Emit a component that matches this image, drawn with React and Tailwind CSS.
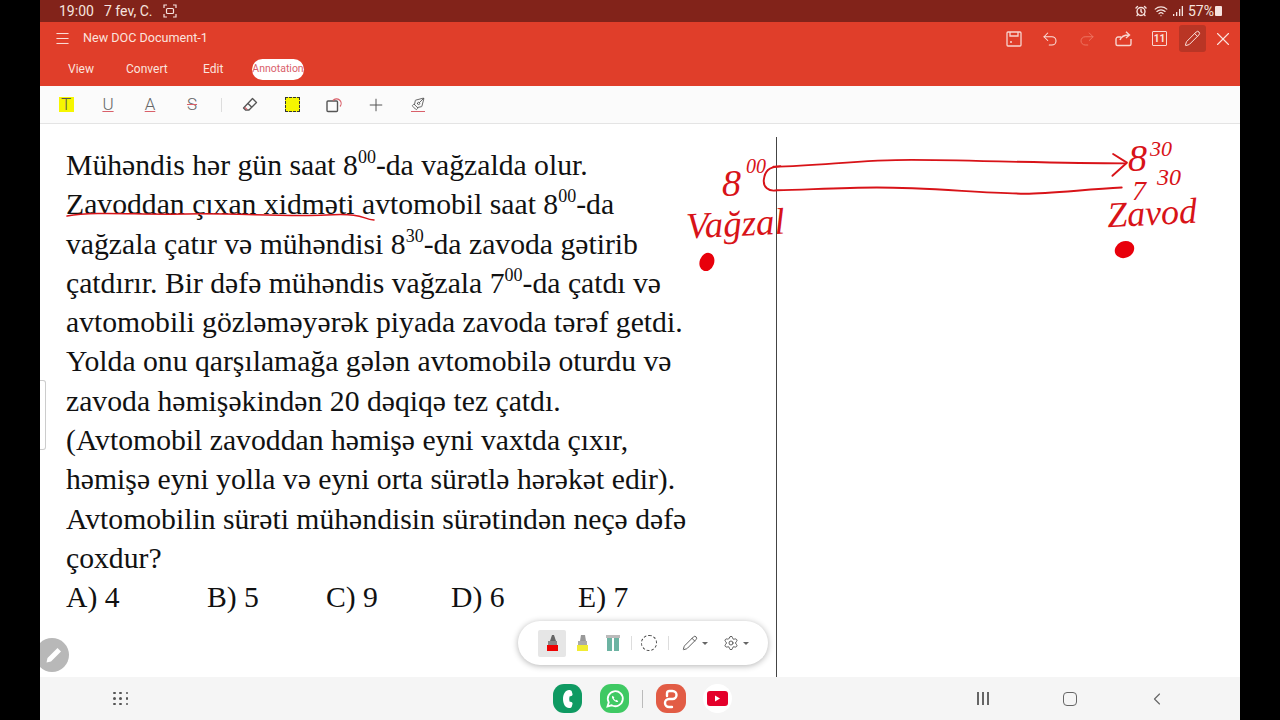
import React from 'react';
import { Menu, Undo2, Redo2, X, Plus, Pencil, Settings, ChevronLeft, AlarmClock, Wifi, PenTool } from 'lucide-react';

const SUP = "text-[18px] top-[-12px] align-baseline relative";

const LINES = [
  <>Mühəndis hər gün saat 8<sup className={SUP}>00</sup>-da vağzalda olur.</>,
  <>Zavoddan çıxan xidməti avtomobil saat 8<sup className={SUP}>00</sup>-da</>,
  <>vağzala çatır və mühəndisi 8<sup className={SUP}>30</sup>-da zavoda gətirib</>,
  <>çatdırır. Bir dəfə mühəndis vağzala 7<sup className={SUP}>00</sup>-da çatdı və</>,
  <>avtomobili gözləməyərək piyada zavoda tərəf getdi.</>,
  <>Yolda onu qarşılamağa gələn avtomobilə oturdu və</>,
  <>zavoda həmişəkindən 20 dəqiqə tez çatdı.</>,
  <>(Avtomobil zavoddan həmişə eyni vaxtda çıxır,</>,
  <>həmişə eyni yolla və eyni orta sürətlə hərəkət edir).</>,
  <>Avtomobilin sürəti mühəndisin sürətindən neçə dəfə</>,
  <>çoxdur?</>,
];

function SaveIcon() {
  return (
    <svg width="16" height="16" viewBox="0 0 16 16" fill="none" stroke="#f8d5cf" strokeWidth="1.3">
      <rect x="1" y="1" width="14" height="14" rx="1" />
      <path d="M4 1v4h8V1M4 11h2" />
    </svg>
  );
}

function ShareIcon() {
  return (
    <svg width="17" height="16" viewBox="0 0 17 16" fill="none" stroke="#f8d5cf" strokeWidth="1.4">
      <path d="M6 6H3C2 6 1 7 1 8v5c0 1 .7 1.500 1.500 1.500h12c.8 0 1.500-.5 1.500-1.500V8" />
      <path d="M5 9c1-3 4-5 9-5M11 .8 14.500 4 11 7" />
    </svg>
  );
}

function ToolbarBtn({ children }) {
  return <div className="w-[42px] h-full flex items-center justify-center">{children}</div>;
}

function Toolbar() {
  return (
    <div className="h-[38px] bg-[#fbfbfb] border-b border-[#e4e4e4] flex items-center pl-[5px] text-[#666] text-[17px] font-light font-['Roboto',sans-serif]">
      <ToolbarBtn>
        <span className="w-[15px] h-[15px] bg-[#f6f600] flex items-center justify-center leading-none text-[#555]">T</span>
      </ToolbarBtn>
      <ToolbarBtn><span className="underline decoration-[#d9606a] underline-offset-1 leading-none">U</span></ToolbarBtn>
      <ToolbarBtn><span className="underline decoration-[#d9606a] underline-offset-1 leading-none">A</span></ToolbarBtn>
      <ToolbarBtn><span className="line-through decoration-[#d9606a] leading-none">S</span></ToolbarBtn>
      <div className="w-[16px] flex justify-center"><div className="w-px h-[14px] bg-[#ddd]" /></div>
      <ToolbarBtn>
        <svg width="16" height="16" viewBox="0 0 16 16" fill="none" stroke="#555" strokeWidth="1.3" strokeLinejoin="round">
          <path d="M10.500 1.500 14.500 5.500 7 13H3.500L1.500 11z" />
          <path d="M6 6.500 9.800 10.300" />
          <path d="M3 10.500 5 12.500" stroke="#d9606a" />
        </svg>
      </ToolbarBtn>
      <ToolbarBtn>
        <span className="w-[15px] h-[15px] bg-[#f6f600] border border-dashed border-[#333]" />
      </ToolbarBtn>
      <ToolbarBtn>
        <svg width="17" height="17" viewBox="0 0 17 17" fill="none">
          <rect x="1" y="5" width="10.500" height="10.500" rx="1" stroke="#555" strokeWidth="1.400" />
          <path d="M7 4.500a4.500 4.500 0 1 1 7 6" stroke="#d9606a" strokeWidth="1.200" />
        </svg>
      </ToolbarBtn>
      <ToolbarBtn><Plus size={20} strokeWidth={1.2} color="#555" /></ToolbarBtn>
      <ToolbarBtn>
        <div className="flex flex-col items-center">
          <PenTool size={14} strokeWidth={1.5} color="#555" className="-scale-x-100" />
          <div className="w-[14px] h-px bg-[#d9606a]" />
        </div>
      </ToolbarBtn>
    </div>
  );
}

function Ink() {
  // freehand strokes on the right-hand page, coordinates follow the zoomed ink
  return (
    <svg className="absolute left-[630px] top-[11px]" width="540" height="145" viewBox="0 0 1566 420" fill="none" stroke="#d81318" strokeWidth="5.500" strokeLinecap="round" strokeLinejoin="round">
      <path d="M300 92C450 88 550 72 700 72S1100 82 1320 82" />
      <path d="M1285 55 1325 80 1283 118" />
      <path d="M1310 152C1200 158 1100 170 1030 170 900 168 750 152 600 152 500 152 400 158 310 160 285 165 270 150 272 130 275 105 285 92 320 90" />
      <ellipse cx="107" cy="368" rx="21" ry="27" fill="#e8000b" stroke="none" transform="rotate(20 107 368)" />
      <ellipse cx="1318" cy="332" rx="29" ry="24" fill="#e8000b" stroke="none" transform="rotate(-25 1318 332)" />
    </svg>
  );
}

function InkText({ className, children }) {
  return (
    <span className={`absolute whitespace-nowrap leading-none text-[#d81318] italic font-['Liberation_Serif',serif] ${className}`}>
      {children}
    </span>
  );
}

export default function App() {
  return (
    <div className="w-[1280px] h-[720px] bg-black flex justify-center overflow-hidden">
      <div className="w-[1200px] h-full flex flex-col bg-white">
        {/* status bar */}
        <div className="h-[22px] bg-[#82231a] flex items-center justify-between pl-[19px] pr-[18px] text-[#f6e3df] text-[14px] font-['Roboto',sans-serif]">
          <div className="flex items-center">
            <span className="w-[45px]">19:00</span>
            <span className="w-[59px]">7 fev, C.</span>
            <svg width="14" height="14" viewBox="0 0 14 14" fill="none" stroke="#f6e3df" strokeWidth="1.200">
              <path d="M1 4V1h3M10 1h3v3M13 10v3h-3M4 13H1v-3" />
              <rect x="3.500" y="4.500" width="7" height="5" rx="1" />
            </svg>
          </div>
          <div className="flex items-center gap-[5px]">
            <AlarmClock size={12} strokeWidth={2.800} />
            <Wifi size={14} strokeWidth={2} className="ml-[2px]" />
            <svg width="10" height="11" viewBox="0 0 10 11" fill="#f6e3df"><path d="M0 8h1.300v2H0zM3 6h1.300v4H3zM6 3h1.300v7H6zM8.700 0H10v10H8.700z" /></svg>
            <span>57%</span>
            <span className="w-[7px] h-[10px] bg-[#f6e3df] rounded-[1px] ml-[-4px]" />
          </div>
        </div>

        {/* header */}
        <div className="h-[64px] bg-[#e03e2a] flex flex-col text-[#fbe3de] text-[12px] font-['Roboto',sans-serif]">
          <div className="h-[33px] flex items-center pl-[14px]">
            <Menu size={17} strokeWidth={1.400} />
            <span className="ml-[12px] text-[12.600px]">New DOC Document-1</span>
            <div className="ml-auto flex items-center">
              <div className="w-[36px] flex justify-center"><SaveIcon /></div>
              <div className="w-[36px] flex justify-center"><Undo2 size={18} strokeWidth={1.400} /></div>
              <div className="w-[37px] flex justify-center text-[#ee7a68]"><Redo2 size={18} strokeWidth={1.200} /></div>
              <div className="w-[36px] flex justify-center"><ShareIcon /></div>
              <div className="w-[37px] flex justify-center">
                <span className="w-[15px] h-[15px] border border-[#f8d5cf] rounded-[1px] text-[10px] font-bold leading-[13px] text-center">11</span>
              </div>
              <div className="w-[27px] h-[27px] ml-[1px] rounded-[3px] bg-[#b93525] flex items-center justify-center"><Pencil size={17} strokeWidth={1.400} /></div>
              <div className="w-[34px] flex justify-center"><X size={22} strokeWidth={1.200} /></div>
            </div>
          </div>
          <div className="flex items-center h-[22px] mt-[3px] pl-[28px]">
            <span className="w-[58px]">View</span>
            <span className="w-[77px]">Convert</span>
            <span className="w-[49px]">Edit</span>
            <span className="w-[52px] h-[21px] rounded-full bg-white text-[#d9606a] text-[10.500px] flex items-center justify-center">Annotation</span>
          </div>
        </div>

        <Toolbar />

        {/* page */}
        <div className="relative flex-1 overflow-hidden pl-[26px] pt-[22px] text-[#111] text-[29.700px] leading-[39.300px] font-['Liberation_Serif',serif]">
          {LINES.map((line, i) => (
            <div key={i} className="whitespace-nowrap">{line}</div>
          ))}
          <div className="flex whitespace-nowrap">
            <span className="w-[141px]">A) 4</span>
            <span className="w-[119px]">B) 5</span>
            <span className="w-[125px]">C) 9</span>
            <span className="w-[127px]">D) 6</span>
            <span>E) 7</span>
          </div>

          {/* underline ink over the second line */}
          <svg className="absolute left-[26px] top-[83px]" width="310" height="18" viewBox="0 0 310 18" fill="none">
            <path d="M1 9C30 4 70 8 120 7S220 10 260 8 295 12 308 13" stroke="#d81318" strokeWidth="1.500" strokeLinecap="round" />
          </svg>

          <div className="absolute left-[736px] top-[13px] bottom-0 w-px bg-[#444]" />
          <Ink />
          <InkText className="left-[682px] top-[40px] text-[38px]">8</InkText>
          <InkText className="left-[706px] top-[32px] text-[20px]">00</InkText>
          <InkText className="left-[646px] top-[81px] text-[37px] -rotate-3">Vağzal</InkText>
          <InkText className="left-[1088px] top-[15px] text-[38px]">8</InkText>
          <InkText className="left-[1110px] top-[14px] text-[22px]">30</InkText>
          <InkText className="left-[1092px] top-[53px] text-[28px]">7</InkText>
          <InkText className="left-[1117px] top-[41px] text-[24px]">30</InkText>
          <InkText className="left-[1067px] top-[71px] text-[36px] -rotate-3">Zavod</InkText>

          {/* side handle */}
          <div className="absolute left-0 top-[256px] w-[6px] h-[70px] bg-white border-r border-y border-[#ccc] rounded-r-[3px]" />

          {/* pen button */}
          <div className="absolute left-[-5px] top-[514px] w-[34px] h-[34px] rounded-full bg-[#b8b8b8] flex items-center justify-center pl-[4px]">
            <svg width="18" height="18" viewBox="0 0 18 18" fill="#fff"><path d="M12.500 2 16 5.500 6 15.500 1.500 16.500 2.500 12z" /></svg>
          </div>

          {/* floating pen bar */}
          <div className="absolute left-[478px] top-[497px] w-[250px] h-[44px] bg-white rounded-full shadow-[0_1px_6px_rgba(0,0,0,0.3)] flex items-center pl-[20px]">
            <div className="w-[28px] h-[27px] bg-[#e6e6e6] rounded-[2px] flex items-center justify-center">
              <svg width="13" height="18" viewBox="0 0 13 18"><path d="M4 7 6 1h2l2 6z" fill="#666" /><path d="M2 7h9v4H2z" fill="#888" /><path d="M1 11h11v6H1z" fill="#e00" /></svg>
            </div>
            <div className="w-[33px] flex justify-center">
              <svg width="13" height="18" viewBox="0 0 13 18"><path d="M4 7 5 1h4l1 6z" fill="#999" /><path d="M2 7h9v4H2z" fill="#aaa" /><path d="M1 11h11v6H1z" fill="#f1ec33" /></svg>
            </div>
            <div className="w-[27px] flex justify-center">
              <svg width="14" height="16" viewBox="0 0 14 16"><path d="M0 0h14v3H0z" fill="#bbb" /><path d="M1 3h5v13H1zM8 3h5v13H8z" fill="#6cb3a2" /></svg>
            </div>
            <div className="w-px h-[14px] bg-[#ddd] ml-[5px]" />
            <div className="w-[16px] h-[16px] rounded-full border border-dashed border-[#444] ml-[9px]" />
            <div className="w-px h-[14px] bg-[#ddd] ml-[11px]" />
            <div className="flex items-center ml-[13px] text-[#555]">
              <Pencil size={16} strokeWidth={1.400} />
              <span className="ml-[4px] border-x-[3px] border-x-transparent border-t-[3px] border-t-[#666]" />
            </div>
            <div className="flex items-center ml-[15px] text-[#555]">
              <Settings size={16} strokeWidth={1.400} />
              <span className="ml-[4px] border-x-[3px] border-x-transparent border-t-[3px] border-t-[#666]" />
            </div>
          </div>
        </div>

        {/* android nav + dock */}
        <div className="h-[43px] bg-[#f5f5f5] flex items-center relative">
          <div className="ml-[73px] w-[16px] grid grid-cols-3 gap-[3px]">
            {Array.from({ length: 9 }).map((_, i) => (
              <span key={i} className="w-[2.500px] h-[2.500px] bg-[#555] rounded-full" />
            ))}
          </div>
          <div className="ml-[424px] flex items-center">
            <div className="w-[29px] h-[29px] rounded-[11px] bg-[#0f9a62] flex items-center justify-center">
              <svg width="14" height="20" viewBox="0 0 14 20" fill="#fff">
                <path d="M8 1c1.500 0 2.500.5 2.800 1.500l.7 2.500c.2 1-.3 1.700-1.200 2l-1.800.6c-.4 1.500-.4 3.300 0 4.800l1.800.6c.9.3 1.400 1 1.200 2l-.7 2.500C10.500 18.500 9.500 19 8 19 4.500 19 2 15 2 10S4.500 1 8 1z" />
              </svg>
            </div>
            <div className="w-[29px] h-[29px] ml-[18px] rounded-[11px] bg-[#3fc963] flex items-center justify-center">
              <svg width="20" height="20" viewBox="0 0 24 24" fill="none" stroke="#fff" strokeWidth="2.200">
                <path d="M3 21l1.500-5A9 9 0 1 1 8 19.500z" />
                <path d="M9 8c-1 1-1 3 1.500 5.500S15 16 16 15l-2-2-1 .7c-1-.5-2-1.500-2.500-2.700l.7-1z" fill="#fff" stroke="none" />
              </svg>
            </div>
            <div className="w-px h-[18px] bg-[#bbb] ml-[13px]" />
            <div className="w-[30px] h-[29px] ml-[13px] rounded-[11px] bg-[#e25c45] flex items-center justify-center">
              <svg width="16" height="20" viewBox="0 0 16 20" fill="none" stroke="#fff" strokeWidth="2.400" strokeLinecap="round"><path d="M4 7V4.500A2.500 2.500 0 0 1 6.500 2h3a4 4 0 0 1 0 8H6a3.500 3.500 0 0 0 0 8h3" /></svg>
            </div>
            <div className="w-[29px] h-[29px] ml-[17px] rounded-full bg-white flex items-center justify-center">
              <svg width="21" height="15" viewBox="0 0 21 15"><rect width="21" height="15" rx="3" fill="#e4002b" /><path d="M8 4.500v6l5-3z" fill="#fff" /></svg>
            </div>
          </div>
          <div className="absolute left-[937px] flex gap-[3.500px]">
            <span className="w-[1.500px] h-[13px] bg-[#666]" />
            <span className="w-[1.500px] h-[13px] bg-[#666]" />
            <span className="w-[1.500px] h-[13px] bg-[#666]" />
          </div>
          <div className="absolute left-[1023px] w-[14px] h-[14px] rounded-[4px] border-[1.500px] border-[#666]" />
          <ChevronLeft className="absolute left-[1107px]" size={20} strokeWidth={1.400} color="#666" />
        </div>
      </div>
    </div>
  );
}
